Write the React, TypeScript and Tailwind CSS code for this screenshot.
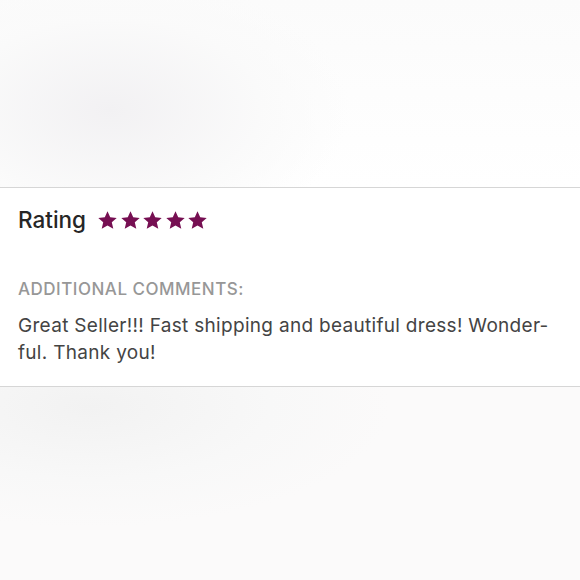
import React from 'react';

const Star: React.FC = () => (
    <svg viewBox="0 0 24 24" className="w-[21px] h-[21px]" fill="#760f52">
        <path d="M12 1.5l3.1 6.9 7.4.7-5.6 5 1.7 7.4L12 17.6l-6.6 3.9 1.7-7.4-5.6-5 7.4-.7z" />
    </svg>
);

const App: React.FC = () => {
    return (
        <div className="w-[580px] h-[580px] flex flex-col bg-[#fafafa] font-['Inter','Liberation_Sans',sans-serif] overflow-hidden">
            <div className="h-[187px] bg-[radial-gradient(ellipse_240px_140px_at_110px_110px,#f2f1f3,rgba(250,250,250,0.9)_65%,rgba(252,252,252,0)),linear-gradient(to_bottom,#fbfbfb,#fdfdfd_50%,#ffffff)]"></div>
            <div className="bg-white border-y border-[#d6d6d6] px-[18px] pt-[18px] pb-[20px]">
                <div className="flex items-center gap-[11px]">
                    <span className="text-[22.5px] font-medium text-[#262626] leading-[28px]">Rating</span>
                    <div className="flex items-center gap-[1.5px]">
                        <Star />
                        <Star />
                        <Star />
                        <Star />
                        <Star />
                    </div>
                </div>
                <p className="mt-[44px] text-[17px] font-medium tracking-[0.5px] text-[#979797] leading-[22px]">ADDITIONAL COMMENTS:</p>
                <p className="mt-[12px] text-[19px] tracking-[0.3px] text-[#444444] leading-[27px]">
                    Great Seller!!! Fast shipping and beautiful dress! Wonder-
                    <br />
                    ful. Thank you!
                </p>
            </div>
            <div className="flex-1 bg-[radial-gradient(ellipse_300px_120px_at_90px_20px,#f2f2f2,#f8f8f8_60%,#fbfafa)]"></div>
        </div>
    );
};

export default App;
